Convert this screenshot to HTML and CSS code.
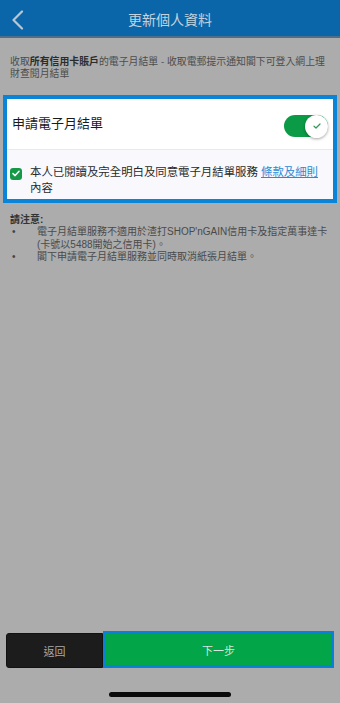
FILE: index.html
```html
<!DOCTYPE html>
<html lang="zh-Hant">
<head>
<meta charset="utf-8">
<title>更新個人資料</title>
<link rel="stylesheet" href="styles.css">
</head>
<body>
<div class="screen">
  <header class="topbar">
    <span class="back-icon">
      <svg width="14" height="20" viewBox="0 0 14 20"><path d="M11 1.5 L2.5 10 L11 18.5" fill="none" stroke="#b9c7d4" stroke-width="2.2" stroke-linecap="round" stroke-linejoin="round"/></svg>
    </span>
    <h1 class="title">更新個人資料</h1>
    <span></span>
  </header>

  <p class="desc"><span>收取</span><b>所有信用卡賬戶</b><span>的電子月結單 - 收取電郵提示通知閣下可登入網上理財查閱月結單</span></p>

  <section class="card">
    <div class="toggle-row">
      <span class="toggle-label">申請電子月結單</span>
      <span class="switch">
        <span class="knob">
          <svg width="8" height="6" viewBox="0 0 8 6"><path d="M1 3.2 L3 5 L7 1" fill="none" stroke="#2f9a55" stroke-width="1.2" stroke-linecap="round" stroke-linejoin="round"/></svg>
        </span>
      </span>
    </div>
    <div class="agree-row">
      <span class="checkbox">
        <svg width="8" height="7" viewBox="0 0 8 7"><path d="M1 3.6 L3.1 5.6 L7 1.3" fill="none" stroke="#ffffff" stroke-width="1.5" stroke-linecap="round" stroke-linejoin="round"/></svg>
      </span>
      <p class="agree-text">本人已閱讀及完全明白及同意電子月結單服務 <a class="link" href="#">條款及細則</a>內容</p>
    </div>
  </section>

  <section class="notice">
    <h2 class="notice-title">請注意:</h2>
    <ul class="notice-list">
      <li>電子月結單服務不適用於渣打SHOP'nGAIN信用卡及指定萬事達卡(卡號以5488開始之信用卡)。</li>
      <li>閣下申請電子月結單服務並同時取消紙張月結單。</li>
    </ul>
  </section>

  <div class="spacer"></div>

  <footer class="actions">
    <button class="btn btn-back" type="button">返回</button>
    <button class="btn btn-next" type="button">下一步</button>
  </footer>
  <div class="home-indicator"></div>
</div>
</body>
</html>
```

FILE: styles.css
```css
* { box-sizing: border-box; }

html, body {
  margin: 0;
  padding: 0;
  background: #acacac;
}

body {
  font-family: "Liberation Sans", "Noto Sans CJK TC", sans-serif;
}

.screen {
  width: 340px;
  height: 703px;
  display: flex;
  flex-direction: column;
  background: #acacac;
  overflow: hidden;
}

.topbar {
  height: 38px;
  padding-top: 3px;
  background: #0a66a9;
  border-bottom: 2px solid #4f6f88;
  display: grid;
  grid-template-columns: 40px 1fr 40px;
  align-items: center;
}

.back-icon {
  display: flex;
  padding-left: 11px;
}

.title {
  margin: 0;
  text-align: center;
  font-size: 14px;
  font-weight: normal;
  line-height: 20px;
  color: #c5d2dd;
}

.desc {
  margin: 18px 0 0;
  padding: 0 10px;
  font-size: 9.9px;
  line-height: 12px;
  color: #4c4c4c;
}

.desc b {
  color: #2b2b2b;
}

.card {
  margin: 15px 3px 0;
  border: 4px solid #0a84d6;
  background: #ffffff;
}

.toggle-row {
  height: 51px;
  border-bottom: 1px solid #e9e9ec;
  display: flex;
  align-items: center;
  justify-content: space-between;
  padding: 0 5px 0 5px;
}

.toggle-label {
  font-size: 13px;
  line-height: 18px;
  color: #1a1a1a;
}

.switch {
  width: 44px;
  height: 22px;
  margin-top: 4px;
  border-radius: 11px;
  background: #0b9a45;
  display: flex;
  justify-content: flex-end;
  align-items: center;
}

.knob {
  width: 23px;
  height: 23px;
  border-radius: 50%;
  background: #ffffff;
  box-shadow: 0 1px 3px rgba(0, 0, 0, 0.35);
  display: flex;
  align-items: center;
  justify-content: center;
}

.agree-row {
  background: #f9f8fc;
  display: flex;
  align-items: flex-start;
  gap: 8px;
  padding: 14px 6px 3px 3px;
}

.checkbox {
  width: 12px;
  height: 12px;
  margin-top: 3.5px;
  flex-shrink: 0;
  border-radius: 3px;
  background: #149a47;
  display: flex;
  align-items: center;
  justify-content: center;
}

.agree-text {
  margin: 0;
  font-size: 11.4px;
  line-height: 16px;
  color: #2a2a2a;
}

.link {
  color: #2a8ad6;
  text-decoration: underline;
}

.notice {
  margin-top: 10px;
  padding: 0 4px 0 10px;
  color: #3a3a3a;
}

.notice-title {
  margin: 0;
  font-size: 10px;
  font-weight: bold;
  line-height: 13px;
  color: #333333;
}

.notice-list {
  margin: 0;
  padding: 0;
  list-style: none;
}

.notice-list li {
  display: flex;
  font-size: 10px;
  line-height: 12.5px;
  color: #4a4a4a;
}

.notice-list li::before {
  content: "•";
  flex: 0 0 25px;
  padding-left: 2px;
  color: #444444;
}

.spacer {
  flex: 1;
}

.actions {
  display: flex;
  align-items: flex-end;
  padding: 0 6px;
}

.btn {
  font-family: "Liberation Sans", "Noto Sans CJK TC", sans-serif;
  font-size: 11px;
  border: none;
  padding: 0;
  margin: 0;
}

.btn-back {
  width: 97px;
  height: 35px;
  background: #1d1c1d;
  border: 1px solid #121212;
  border-radius: 3px 0 0 3px;
  color: #a9a9a9;
}

.btn-next {
  flex: 1;
  height: 37px;
  background: #02a547;
  border: 3px solid #0a80d8;
  color: #d9e6dd;
}

.home-indicator {
  width: 122px;
  height: 5px;
  margin: 24px auto 6px;
  border-radius: 3px;
  background: #0a0a0a;
}
```
